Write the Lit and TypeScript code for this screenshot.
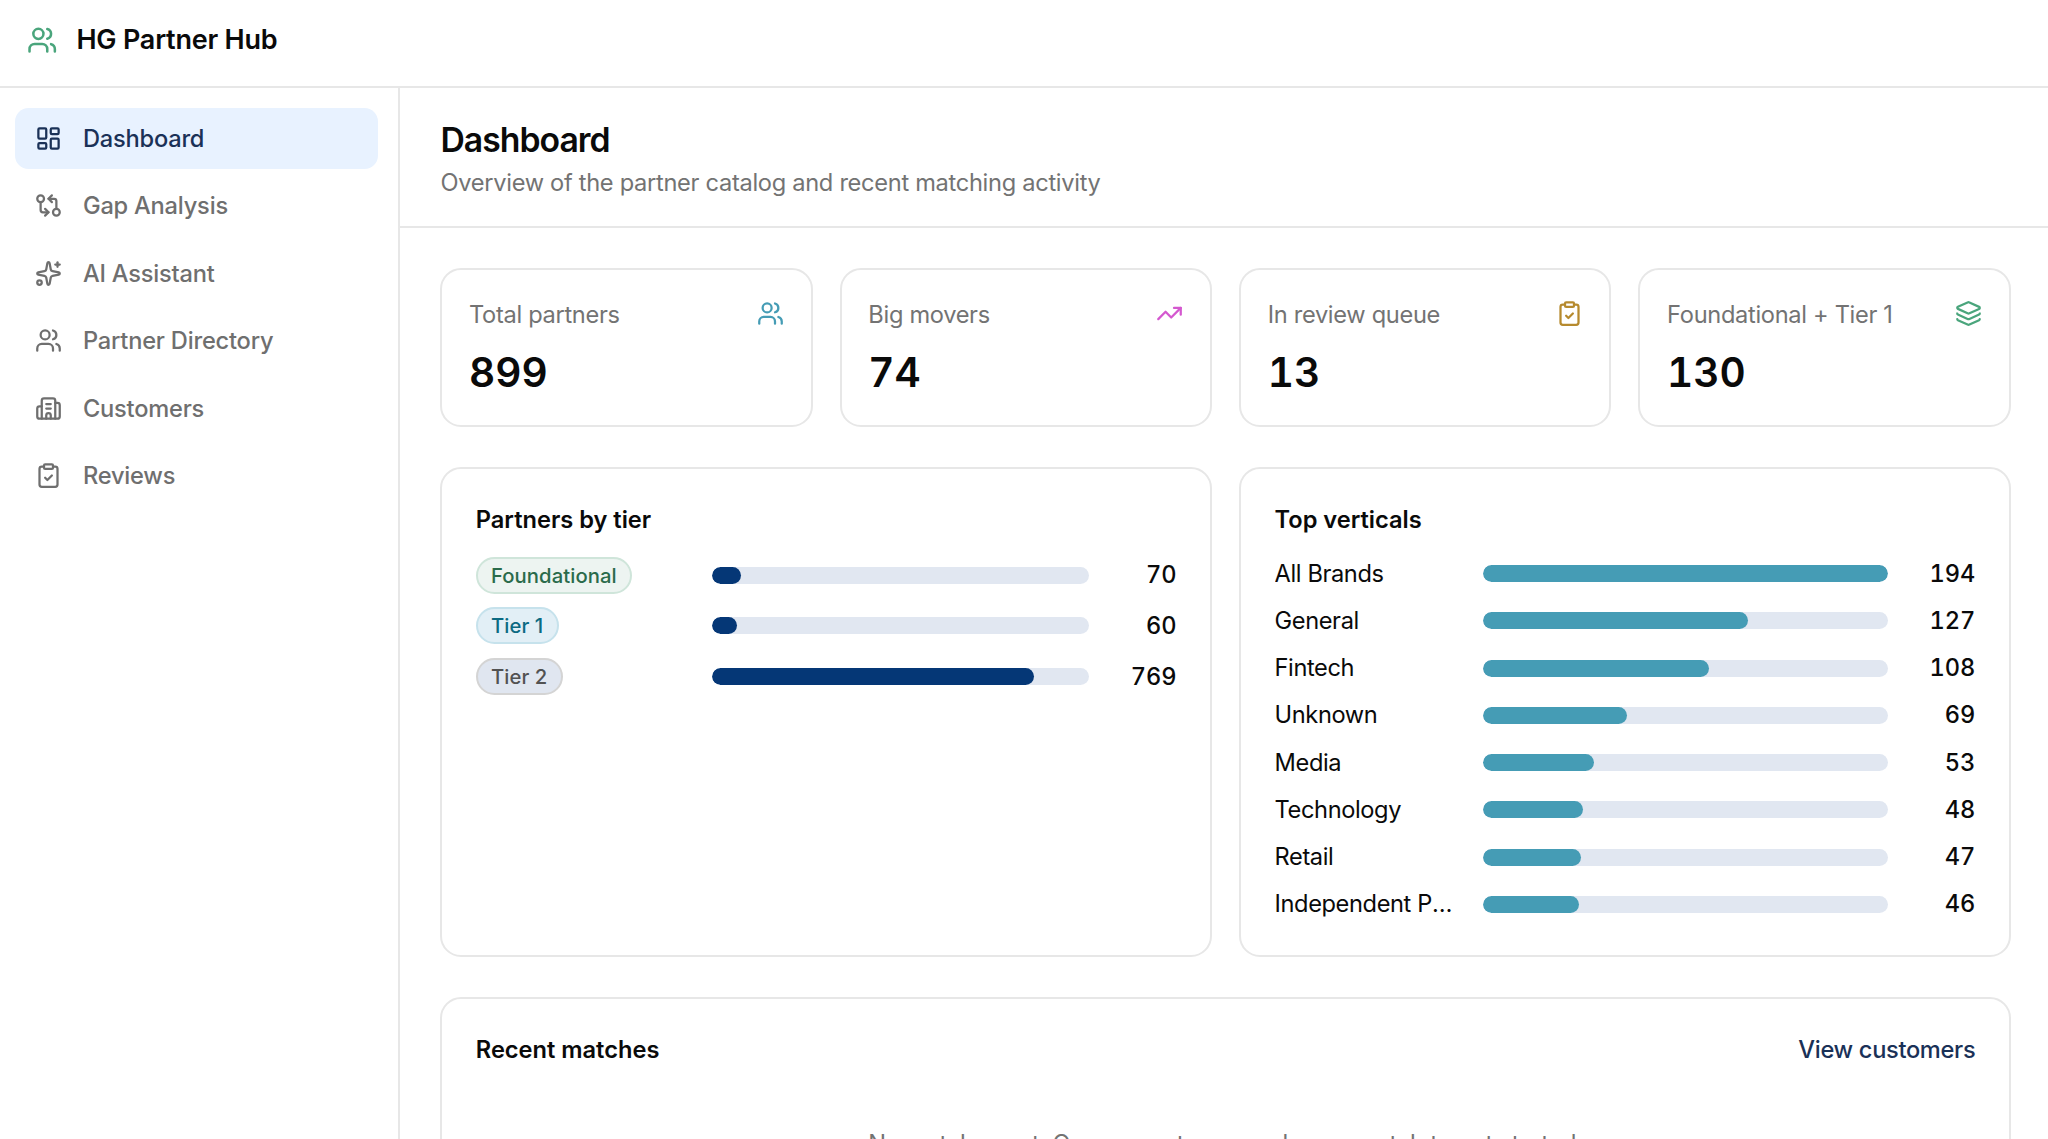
import { LitElement, html, css, svg } from "lit";
import { customElement, property } from "lit/decorators.js";
import { classMap } from "lit/directives/class-map.js";

const ICONS: Record<string, unknown> = {
  users: svg`<path d="M16 21v-2a4 4 0 0 0-4-4H6a4 4 0 0 0-4 4v2"/><path d="M16 3.128a4 4 0 0 1 0 7.744"/><path d="M22 21v-2a4 4 0 0 0-3-3.87"/><circle cx="9" cy="7" r="4"/>`,
  dashboard: svg`<rect width="7" height="9" x="3" y="3" rx="1"/><rect width="7" height="5" x="14" y="3" rx="1"/><rect width="7" height="9" x="14" y="12" rx="1"/><rect width="7" height="5" x="3" y="16" rx="1"/>`,
  compare: svg`<circle cx="5" cy="6" r="3"/><path d="M12 6h5a2 2 0 0 1 2 2v7"/><path d="m15 9-3-3 3-3"/><circle cx="19" cy="18" r="3"/><path d="M12 18H7a2 2 0 0 1-2-2V9"/><path d="m9 15 3 3-3 3"/>`,
  sparkles: svg`<path d="M11.017 2.814a1 1 0 0 1 1.966 0l1.051 5.558a2 2 0 0 0 1.594 1.594l5.558 1.051a1 1 0 0 1 0 1.966l-5.558 1.051a2 2 0 0 0-1.594 1.594l-1.051 5.558a1 1 0 0 1-1.966 0l-1.051-5.558a2 2 0 0 0-1.594-1.594l-5.558-1.051a1 1 0 0 1 0-1.966l5.558-1.051a2 2 0 0 0 1.594-1.594z"/><path d="M20 2v4"/><path d="M22 4h-4"/><circle cx="4" cy="20" r="2"/>`,
  building: svg`<path d="M10 12h4"/><path d="M10 8h4"/><path d="M14 21v-3a2 2 0 0 0-4 0v3"/><path d="M6 10H4a2 2 0 0 0-2 2v7a2 2 0 0 0 2 2h16a2 2 0 0 0 2-2V9a2 2 0 0 0-2-2h-2"/><path d="M6 21V5a2 2 0 0 1 2-2h8a2 2 0 0 1 2 2v16"/>`,
  clipboard: svg`<rect width="8" height="4" x="8" y="2" rx="1"/><path d="M16 4h2a2 2 0 0 1 2 2v14a2 2 0 0 1-2 2H6a2 2 0 0 1-2-2V6a2 2 0 0 1 2-2h2"/><path d="m9 14 2 2 4-4"/>`,
  trending: svg`<path d="M16 7h6v6"/><path d="m22 7-8.5 8.5-5-5L2 17"/>`,
  layers: svg`<path d="M12.83 2.18a2 2 0 0 0-1.66 0L2.6 6.08a1 1 0 0 0 0 1.83l8.58 3.91a2 2 0 0 0 1.66 0l8.58-3.9a1 1 0 0 0 0-1.83z"/><path d="M2 12a1 1 0 0 0 .58.91l8.6 3.91a2 2 0 0 0 1.65 0l8.58-3.9A1 1 0 0 0 22 12"/><path d="M2 17a1 1 0 0 0 .58.91l8.6 3.91a2 2 0 0 0 1.65 0l8.58-3.9A1 1 0 0 0 22 17"/>`,
};

@customElement("hub-icon")
class HubIcon extends LitElement {
  @property() name = "users";
  static styles = css`
    :host { display: block; flex: none; width: 27px; height: 27px; }
    svg {
      display: block; width: 100%; height: 100%; fill: none; stroke: currentColor;
      stroke-width: 2; stroke-linecap: round; stroke-linejoin: round;
    }
  `;
  render() {
    return html`<svg viewBox="0 0 24 24" aria-hidden="true">${ICONS[this.name]}</svg>`;
  }
}

@customElement("meter-bar")
class MeterBar extends LitElement {
  @property({ type: Number }) value = 0;
  @property({ type: Number }) max = 1;
  static styles = css`
    :host { display: block; height: 17px; border-radius: 9px; background: #e1e7f1; overflow: hidden; }
    .fill { height: 100%; border-radius: 9px; background: var(--bar-color, #053776); }
  `;
  render() {
    return html`<div class="fill" style="width:${(this.value / this.max) * 100}%"></div>`;
  }
}

const NAV = [
  { label: "Dashboard", icon: "dashboard", active: true },
  { label: "Gap Analysis", icon: "compare" },
  { label: "AI Assistant", icon: "sparkles" },
  { label: "Partner Directory", icon: "users" },
  { label: "Customers", icon: "building" },
  { label: "Reviews", icon: "clipboard" },
];
const STATS = [
  { label: "Total partners", value: 899, icon: "users", tone: "teal" },
  { label: "Big movers", value: 74, icon: "trending", tone: "pink" },
  { label: "In review queue", value: 13, icon: "clipboard", tone: "gold" },
  { label: "Foundational + Tier 1", value: 130, icon: "layers", tone: "green" },
];
const TIERS = [
  { label: "Foundational", value: 70, kind: "foundational" },
  { label: "Tier 1", value: 60, kind: "tier1" },
  { label: "Tier 2", value: 769, kind: "tier2" },
];
const VERTICALS: [string, number][] = [
  ["All Brands", 194], ["General", 127], ["Fintech", 108], ["Unknown", 69],
  ["Media", 53], ["Technology", 48], ["Retail", 47], ["Independent Publisher", 46],
];

@customElement("app-root")
class AppRoot extends LitElement {
  static styles = css`
    :host {
      display: flex; flex-direction: column; height: 1139px; overflow: hidden;
      background: #fff; color: #0a0a0a;
      font-family: Inter, "Liberation Sans", sans-serif;
      font-size: 23.625px; line-height: 33.75px; letter-spacing: -0.31px;
      --line: #e7e7e7;
    }
    * { box-sizing: border-box; }
    h1, h2, p { margin: 0; }
    .topbar {
      flex: none; display: flex; align-items: center; gap: 19px; height: 88px;
      padding: 0 27px 6.6px; border-bottom: 2px solid var(--line);
    }
    .topbar hub-icon { width: 30.4px; height: 30.4px; color: #4aa57c; }
    .brand { padding-top: 2px; font-size: 27px; line-height: 40.5px; font-weight: 600; letter-spacing: -0.22px; }
    .body { flex: 1; min-height: 0; display: flex; }
    .sidebar {
      flex: none; width: 400px; border-right: 2px solid var(--line);
      padding: 20px 20px 0 15px; display: flex; flex-direction: column; gap: 6.75px;
    }
    .nav {
      display: flex; align-items: center; gap: 20.7px; height: 60.75px;
      padding: 0 20.25px; border-radius: 13.5px; color: #6f6f6f; font-weight: 500; letter-spacing: -0.2px;
    }
    .nav.active { background: #e8f2ff; color: #1a3157; }
    .main { flex: 1; min-width: 0; }
    .pagehead { height: 140px; padding: 27.6px 40.5px 0; border-bottom: 2px solid var(--line); }
    h1 { font-size: 33.75px; line-height: 47.25px; font-weight: 600; letter-spacing: -1px; }
    .sub { margin-top: 2.8px; color: #737373; letter-spacing: -0.29px; }
    .content { padding: 40.1px 37.2px 0 40.3px; display: flex; flex-direction: column; gap: 40.5px; }
    .stats { display: grid; grid-template-columns: repeat(4, 1fr); gap: 27px; }
    .card { border: 2px solid var(--line); border-radius: 21px; }
    .stat { height: 158.6px; padding: 26.5px 26.7px 0; display: flex; flex-direction: column; gap: 14.2px; }
    .stathead { display: flex; align-items: center; justify-content: space-between; color: #737373; }
    .stathead span { margin: 1px 0 -1px; }
    .num { padding-top: 1px; font-size: 40.5px; line-height: 54px; font-weight: 600; letter-spacing: 0; font-variant-numeric: tabular-nums; }
    .teal { color: #459cb5; } .pink { color: #d458cf; } .gold { color: #b68a2e; } .green { color: #4aa57c; }
    .panels { display: grid; grid-template-columns: 1fr 1fr; gap: 27px; }
    .panel { padding: 33.5px; }
    h2 { font-size: 23.625px; line-height: 33.75px; font-weight: 600; letter-spacing: 0; }
    .rows { margin-top: 20.25px; display: flex; flex-direction: column; gap: 13.5px; }
    .row { display: grid; grid-template-columns: 216px 1fr 67.3px; gap: 20.25px; align-items: center; }
    .verticals .row { grid-template-columns: 188.5px 1fr 67px; }
    .verticals { --bar-color: #459cb5; }
    .name { overflow: hidden; text-overflow: ellipsis; white-space: nowrap; letter-spacing: -0.38px; }
    .val { text-align: right; font-weight: 500; letter-spacing: 0; font-variant-numeric: tabular-nums; }
    .badge {
      justify-self: start; border: 2px solid; border-radius: 19px; padding: 3px 13.2px;
      font-size: 20.25px; line-height: 27.1px; font-weight: 500; letter-spacing: 0.08px;
    }
    .foundational { background: #edf4f1; border-color: #cfe5da; color: #2a6b4b; }
    .tier1 { background: #e2eff6; border-color: #c6e2ec; color: #0b6a82; }
    .tier2 { background: #e0e6f0; border-color: #d4d4d4; color: #525252; }
    .recent { height: 300px; }
    .recenthead { display: flex; justify-content: space-between; }
    .link { color: #1a3157; font-weight: 500; }
    .empty { margin-top: 60.4px; text-align: center; color: #737373; letter-spacing: -0.24px; }
  `;

  render() {
    return html`
      <header class="topbar"><hub-icon name="users"></hub-icon><span class="brand">HG Partner Hub</span></header>
      <div class="body">
        <nav class="sidebar">
          ${NAV.map((n) => html`<div class=${classMap({ nav: true, active: !!n.active })}>
            <hub-icon name=${n.icon}></hub-icon><span>${n.label}</span></div>`)}
        </nav>
        <main class="main">
          <div class="pagehead">
            <h1>Dashboard</h1>
            <p class="sub">Overview of the partner catalog and recent matching activity</p>
          </div>
          <div class="content">
            <section class="stats">
              ${STATS.map((s) => html`<div class="card stat">
                <div class="stathead"><span>${s.label}</span><hub-icon class=${s.tone} name=${s.icon}></hub-icon></div>
                <div class="num">${s.value}</div></div>`)}
            </section>
            <section class="panels">
              <div class="card panel tiers"><h2>Partners by tier</h2>
                <div class="rows">${TIERS.map((t) => html`<div class="row">
                  <span class="badge ${t.kind}">${t.label}</span>
                  <meter-bar .value=${t.value} .max=${899}></meter-bar>
                  <span class="val">${t.value}</span></div>`)}</div>
              </div>
              <div class="card panel verticals"><h2>Top verticals</h2>
                <div class="rows">${VERTICALS.map(([name, v]) => html`<div class="row">
                  <span class="name">${name}</span>
                  <meter-bar .value=${v} .max=${194}></meter-bar>
                  <span class="val">${v}</span></div>`)}</div>
              </div>
            </section>
            <section class="card panel recent">
              <div class="recenthead"><h2>Recent matches</h2><span class="link">View customers</span></div>
              <p class="empty">No matches yet. Open a customer and run a match to get started.</p>
            </section>
          </div>
        </main>
      </div>`;
  }
}
